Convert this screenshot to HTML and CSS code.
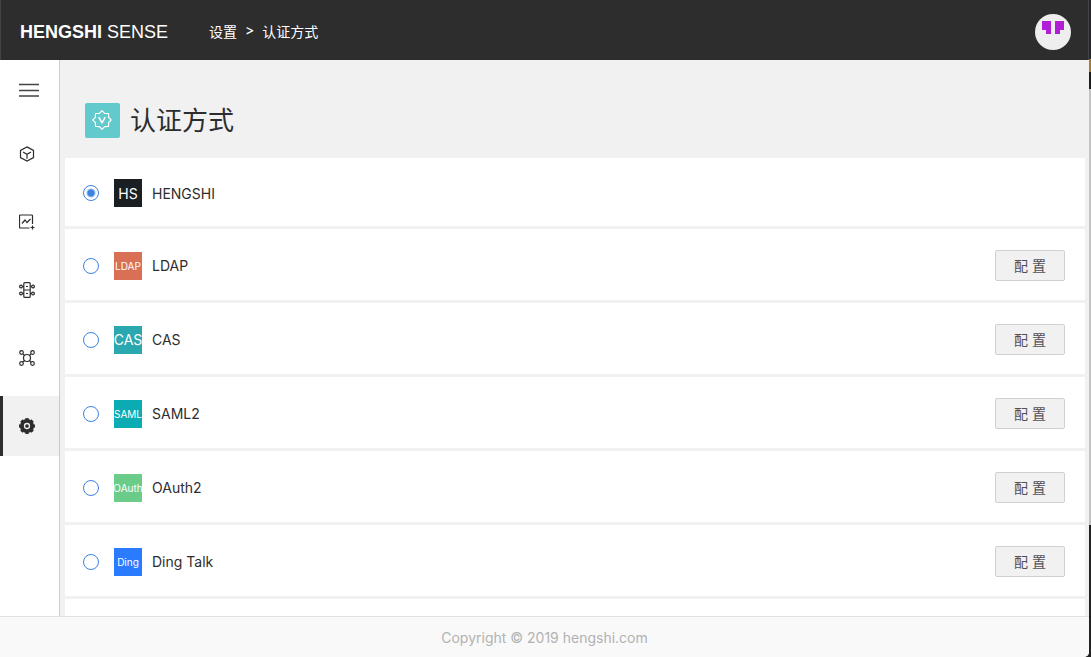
FILE: index.html
```html
<!DOCTYPE html>
<html lang="zh-CN">
<head>
    <meta charset="UTF-8">
    <meta name="viewport" content="width=device-width, initial-scale=1.0">
    <title>认证方式</title>
    <link rel="stylesheet" href="styles.css">
</head>
<body>
    <div class="app">
        <header class="topbar">
            <a class="brand" href="#"><strong>HENGSHI</strong> SENSE</a>
            <nav class="breadcrumb">
                <a href="#">设置</a>
                <span>&gt;</span>
                <a href="#">认证方式</a>
            </nav>
            <button class="avatar" type="button">
                <svg width="36" height="36" viewBox="0 0 36 36">
                    <path fill="#b01fd6" d="M7 7h9v13h-5v-4H7zM20 7h9v9h-4v4h-5z"/>
                </svg>
            </button>
        </header>
        <div class="body">
            <nav class="sidebar">
                <button class="menu" type="button">
                    <svg width="20" height="14" viewBox="0 0 20 14">
                        <path d="M0 1.5h20M0 7.5h20M0 13h20"/>
                    </svg>
                </button>
                <a class="item" href="#">
                    <svg width="16" height="16" viewBox="0 0 16 16">
                        <path d="M8 .9l6.500 3.500v7.200L8 15.100l-6.500-3.500V4.400z"/>
                        <path d="M4 5.900l4 2.300 4-2.300M8 8.200v4.500"/>
                    </svg>
                </a>
                <a class="item" href="#">
                    <svg width="16" height="16" viewBox="0 0 16 16">
                        <path d="M13.500 10V2a1 1 0 0 0-1-1h-11a1 1 0 0 0-1 1v11a1 1 0 0 0 1 1H10.500"/>
                        <path d="M3 9.500l3-3.500 2 2.500 3.500-3.500M13.500 11.500v4M11.500 13.500h4"/>
                    </svg>
                </a>
                <a class="item" href="#">
                    <svg width="16" height="16" viewBox="0 0 16 16">
                        <rect x="4.800" y=".6" width="6.400" height="14.800" rx="1"/>
                        <path d="M5 8h6M7 4.500h2M7 11.500h2M3.500 4.500H5M3.500 11.500H5M11 4.500h1.500M11 11.500h1.500"/>
                        <circle cx="2" cy="4.500" r="1.400"/>
                        <circle cx="2" cy="11.500" r="1.400"/>
                        <circle cx="14" cy="4.500" r="1.400"/>
                        <circle cx="14" cy="11.500" r="1.400"/>
                    </svg>
                </a>
                <a class="item" href="#">
                    <svg width="16" height="16" viewBox="0 0 16 16">
                        <circle cx="8" cy="8" r="3.500"/>
                        <path d="M4 4l1.700 1.700M12 4l-1.700 1.700M4 12l1.700-1.700M12 12l-1.700-1.700"/>
                        <circle cx="2.500" cy="2.500" r="1.800"/>
                        <circle cx="13.500" cy="2.500" r="1.800"/>
                        <circle cx="2.500" cy="13.500" r="1.800"/>
                        <circle cx="13.500" cy="13.500" r="1.800"/>
                    </svg>
                </a>
                <a class="item active" href="#">
                    <svg width="16" height="16" viewBox="0 0 16 16">
                        <circle class="gear" cx="8" cy="8" r="7.100"/>
                        <circle class="teeth" cx="8" cy="8" r="7" pathLength="80"/>
                        <circle class="hole" cx="8" cy="8" r="2.500"/>
                    </svg>
                </a>
            </nav>
            <main class="content">
                <div class="title">
                    <span class="title-icon">
                        <svg width="20" height="20" viewBox="0 0 20 20">
                            <path d="M10 .8l2.700 2.600 3.800.1.100 3.800L19.200 10l-2.600 2.700-.1 3.800-3.800.1L10 19.200l-2.700-2.600-3.800-.1-.1-3.800L.8 10l2.600-2.700.1-3.800 3.800-.1z"/>
                            <path d="M6.800 7.200L10 12.800l3.200-5.600" stroke-width="1.600"/>
                        </svg>
                    </span>
                    <h1>认证方式</h1>
                </div>
                <ul class="methods">
                    <li>
                        <label><input type="radio" name="auth" checked><span class="badge hs">HS</span>HENGSHI</label>
                    </li>
                    <li>
                        <label><input type="radio" name="auth"><span class="badge small ldap">LDAP</span>LDAP</label>
                        <button type="button">配 置</button>
                    </li>
                    <li>
                        <label><input type="radio" name="auth"><span class="badge cas">CAS</span>CAS</label>
                        <button type="button">配 置</button>
                    </li>
                    <li>
                        <label><input type="radio" name="auth"><span class="badge small saml">SAML</span>SAML2</label>
                        <button type="button">配 置</button>
                    </li>
                    <li>
                        <label><input type="radio" name="auth"><span class="badge small oauth">OAuth</span>OAuth2</label>
                        <button type="button">配 置</button>
                    </li>
                    <li>
                        <label><input type="radio" name="auth"><span class="badge small ding">Ding</span>Ding Talk</label>
                        <button type="button">配 置</button>
                    </li>
                    <li></li>
                </ul>
            </main>
        </div>
        <footer class="footer">Copyright © 2019 hengshi.com</footer>
    </div>
</body>
</html>
```

FILE: styles.css
```css
* {
    box-sizing: border-box;
}
body {
    margin: 0;
    padding-right: 2px;
    background: linear-gradient(#26262a 59px, #a87c30 59px, #a87c30 72px, #1c1c1c 72px, #1c1c1c 89px, #c4c4c4 89px, #c4c4c4 525px, #222 525px);
    font-family: Inter, "Noto Sans CJK SC", sans-serif;
    font-size: 14px;
    color: #2d2d2d;
}
a {
    color: inherit;
    text-decoration: none;
}
button {
    font: inherit;
    cursor: pointer;
}
.app {
    display: flex;
    flex-direction: column;
    height: 100vh;
    border-radius: 0 0 5px 0;
    overflow: hidden;
    background: #f1f1f1;
}
.topbar {
    display: flex;
    align-items: center;
    flex: none;
    height: 60px;
    padding: 4px 17px 0 19px;
    border: solid #444;
    border-width: 0 1px;
    background: #2d2d2d;
    color: #fff;
}
.brand {
    font-family: "Liberation Sans", sans-serif;
    font-size: 18px;
}
.breadcrumb {
    display: flex;
    gap: 8px;
    margin-left: 41px;
    padding-bottom: 2px;
}
.avatar {
    width: 36px;
    height: 36px;
    margin-left: auto;
    padding: 0;
    border: 0;
    border-radius: 50%;
    background: #eee;
}
.avatar svg {
    display: block;
}
.body {
    display: flex;
    flex: 1;
    min-height: 0;
}
.sidebar {
    display: flex;
    flex-direction: column;
    gap: 8px;
    flex: none;
    width: 60px;
    border-right: 1px solid #ccc;
    background: #fff;
}
.sidebar svg {
    fill: none;
    stroke: #2d2d2d;
    stroke-width: 1.2;
}
.menu {
    height: 56px;
    padding: 4px 2px 0 0;
    border: 0;
    background: none;
}
.menu svg {
    display: block;
    margin: auto;
    stroke: #444;
    stroke-width: 1.5;
}
.item {
    display: flex;
    align-items: center;
    height: 60px;
    padding-left: 16px;
    border-left: 3px solid transparent;
}
.item.active {
    border-color: #2d2d2d;
    background: #f1f1f1;
}
.item .gear {
    fill: #2d2d2d;
    stroke: none;
}
.item .teeth {
    stroke-width: 2;
    stroke-dasharray: 6 4;
    stroke-dashoffset: 3;
}
.item .hole {
    stroke: #f1f1f1;
    stroke-width: 1.3;
}
.content {
    flex: 1;
    padding: 0 4px 0 5px;
    overflow: auto;
    scrollbar-width: none;
}
.title {
    display: flex;
    align-items: center;
    gap: 10px;
    padding: 43px 20px 20px;
}
.title-icon {
    display: flex;
    align-items: center;
    justify-content: center;
    width: 35px;
    height: 35px;
    padding: 0 2px 2px 0;
    border-radius: 2px;
    background: #62c9cd;
}
.title-icon svg {
    fill: none;
    stroke: #fff;
    stroke-width: 1.2;
    stroke-linejoin: round;
}
h1 {
    margin: 0;
    font-size: 26px;
    font-weight: 400;
    line-height: 35px;
}
.methods {
    margin: 0;
    padding: 0;
    list-style: none;
}
.methods li {
    display: flex;
    align-items: center;
    justify-content: space-between;
    min-height: 68px;
    margin-bottom: 3px;
    padding: 21px 20px 19px 18px;
    background: #fff;
}
.methods label {
    display: flex;
    align-items: center;
}
.methods input {
    appearance: none;
    width: 16px;
    height: 16px;
    margin: 0 15px 0 0;
    border: 1px solid #3c82e0;
    border-radius: 50%;
    background: #fff;
}
.methods input:checked {
    background: radial-gradient(circle, #3c82e0 3px, #fff 5px);
}
.badge {
    display: flex;
    align-items: center;
    justify-content: center;
    width: 28px;
    height: 28px;
    margin-right: 10px;
    color: #fff;
}
.badge.small {
    font-size: 10px;
}
.hs {
    background: #1a1f24;
}
.ldap {
    background: #d97056;
}
.cas {
    background: #2aa7af;
}
.saml {
    background: #0aabb2;
}
.oauth {
    background: #6bcb89;
}
.ding {
    background: #2a7bff;
}
.methods button {
    width: 70px;
    height: 31px;
    padding: 0 0 2px;
    border: 1px solid #d0d0d0;
    border-radius: 2px;
    background: #f1f1f1;
    color: #50505a;
}
.footer {
    flex: none;
    height: 41px;
    border-top: 1px solid #e1e1e1;
    background: #f9f9f9;
    color: #b2b2b2;
    line-height: 42px;
    text-align: center;
}
```
